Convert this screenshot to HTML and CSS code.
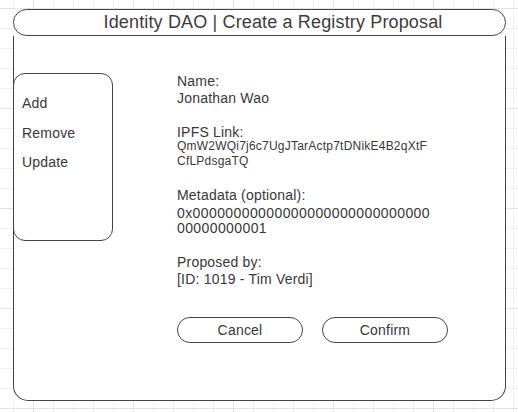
FILE: index.html
```html
<!DOCTYPE html>
<html lang="en">
<head>
<meta charset="utf-8">
<title>Identity DAO | Create a Registry Proposal</title>
<link rel="stylesheet" href="styles.css">
</head>
<body>
<div class="panel">
  <div class="panel-header">Identity DAO | Create a Registry Proposal</div>
  <div class="panel-body">
    <nav class="menu">
      <div class="menu-item">Add</div>
      <div class="menu-item">Remove</div>
      <div class="menu-item">Update</div>
    </nav>
    <div class="content">
      <div class="field">
        <div class="label">Name:</div>
        <div class="value">Jonathan Wao</div>
      </div>
      <div class="field field-ipfs">
        <div class="label">IPFS Link:</div>
        <div class="value hash"><span class="line">QmW2WQi7j6c7UgJTarActp7tDNikE4B2qXtF</span><span class="line">CfLPdsgaTQ</span></div>
      </div>
      <div class="field field-meta">
        <div class="label">Metadata (optional):</div>
        <div class="value meta"><span class="line">0x00000000000000000000000000000</span><span class="line">00000000001</span></div>
      </div>
      <div class="field field-proposer">
        <div class="label">Proposed by:</div>
        <div class="value">[ID: 1019 - Tim Verdi]</div>
      </div>
      <div class="actions">
        <button class="btn" type="button">Cancel</button>
        <button class="btn" type="button">Confirm</button>
      </div>
    </div>
  </div>
</div>
</body>
</html>
```

FILE: styles.css
```css
html, body {
  margin: 0;
  padding: 0;
}

body {
  width: 518px;
  height: 412px;
  overflow: hidden;
  font-family: "Liberation Sans", Arial, sans-serif;
  color: #383838;
  background-color: #ffffff;
  background-image:
    linear-gradient(to right, #e3e3e3 1px, transparent 1px),
    linear-gradient(to bottom, #e3e3e3 1px, transparent 1px),
    linear-gradient(to right, #f0f0f0 1px, transparent 1px),
    linear-gradient(to bottom, #f0f0f0 1px, transparent 1px);
  background-size: 100px 100px, 100px 100px, 20px 20px, 20px 20px;
  background-position: 33px 8px, 33px 8px, 13px 8px, 13px 8px;
}

.panel {
  margin: 9px 0 0 13px;
  width: 493px;
}

.panel-header {
  box-sizing: border-box;
  height: 27px;
  border: 1px solid #444444;
  border-radius: 13.5px;
  background: #ffffff;
  font-size: 18px;
  line-height: 25px;
  letter-spacing: 0.15px;
  text-align: center;
  padding-left: 27px;
  color: #3c3c3c;
  white-space: nowrap;
}

.panel-body {
  box-sizing: border-box;
  height: 365px;
  border: 1px solid #444444;
  border-top: none;
  border-radius: 0 0 15px 15px;
  background: #ffffff;
  display: flex;
  align-items: flex-start;
}

.menu {
  box-sizing: border-box;
  width: 100px;
  height: 168px;
  margin: 37px 0 0 -1px;
  border: 1px solid #444444;
  border-radius: 12px;
  padding: 15px 0 0 8px;
  display: flex;
  flex-direction: column;
}

.menu-item {
  font-size: 14px;
  line-height: 29.6px;
  letter-spacing: 0.2px;
}

.content {
  margin: 37px 0 0 64px;
  display: flex;
  flex-direction: column;
  font-size: 14px;
  letter-spacing: 0.2px;
}

.label,
.value {
  line-height: 17px;
}

.line {
  display: block;
  white-space: nowrap;
}

.hash {
  font-size: 12px;
  line-height: 15px;
  margin-top: -2px;
  letter-spacing: 0.22px;
}

.meta {
  line-height: 15px;
  margin-top: 2px;
  letter-spacing: 0.4px;
}

.field-ipfs {
  margin-top: 17px;
}

.field-meta {
  margin-top: 18px;
}

.field-proposer {
  margin-top: 18px;
}

.actions {
  margin-top: 29px;
  display: flex;
  gap: 19px;
}

.btn {
  box-sizing: border-box;
  width: 126px;
  height: 26px;
  margin: 0;
  padding: 0;
  border: 1px solid #444444;
  border-radius: 13px;
  background: #ffffff;
  font-family: "Liberation Sans", Arial, sans-serif;
  font-size: 14px;
  letter-spacing: 0.2px;
  color: #383838;
  line-height: 24px;
  text-align: center;
}
```
